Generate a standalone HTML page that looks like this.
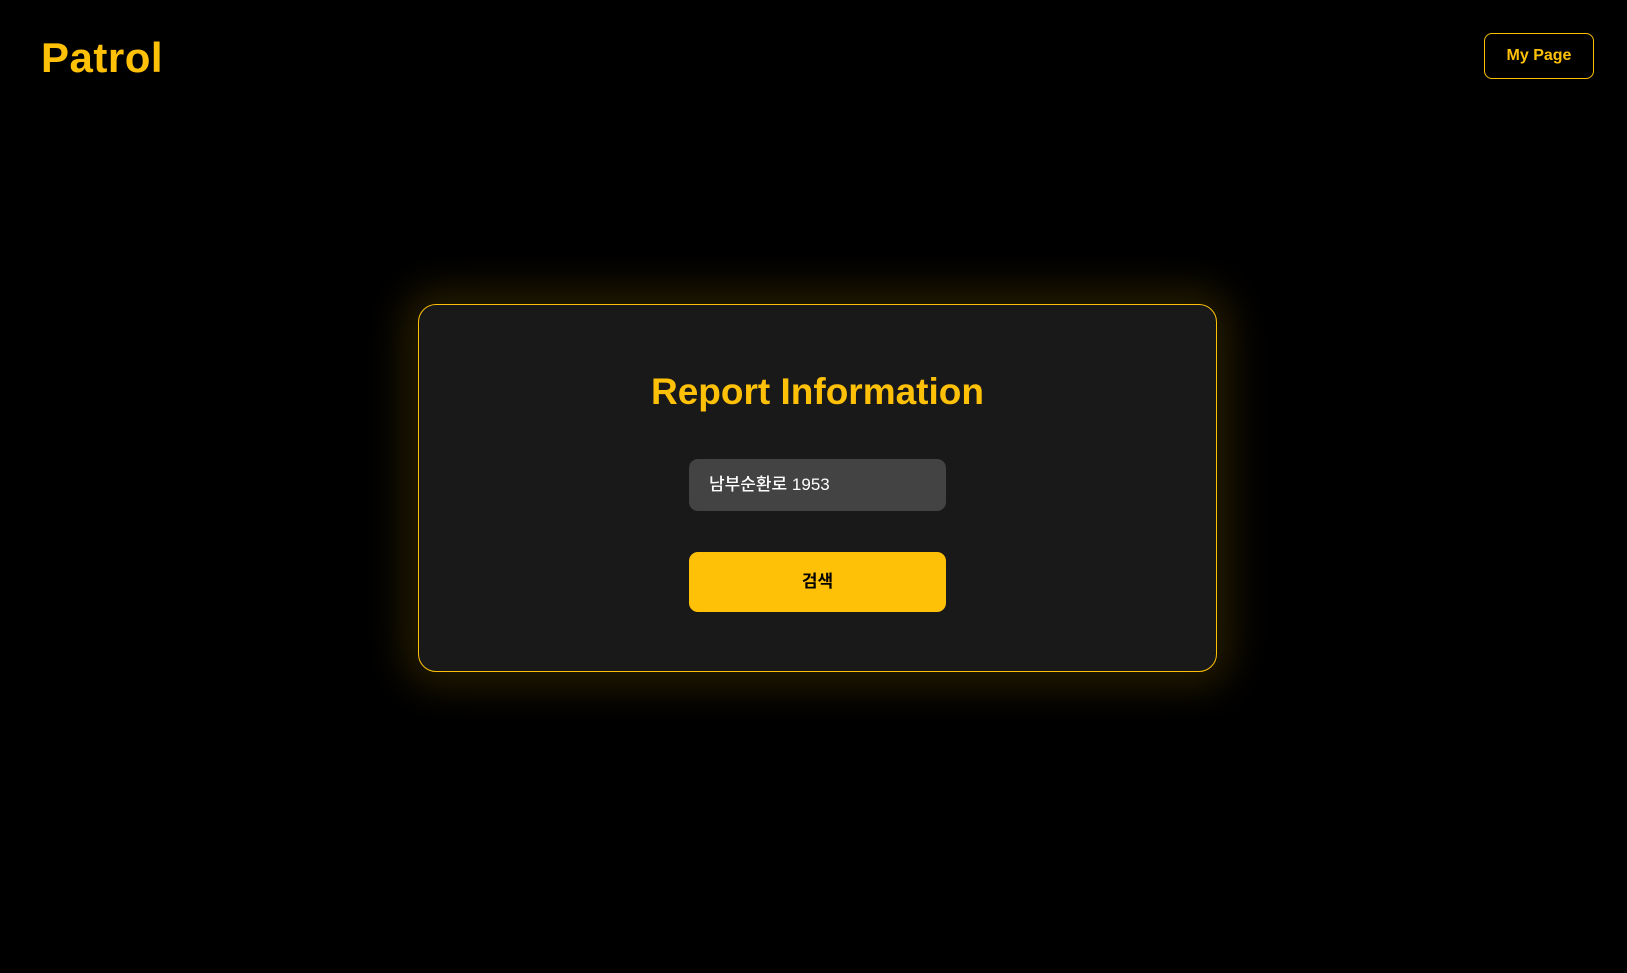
<!DOCTYPE html>
<html><head><meta charset="utf-8"><style>
html,body{margin:0;padding:0;background:#000;width:1627px;height:973px;overflow:hidden;font-family:"Liberation Sans","Noto Sans CJK KR",sans-serif}
.logo{position:absolute;left:41px;top:34px;font-size:42px;font-weight:bold;color:#ffc107;letter-spacing:0.5px}
.my{position:absolute;left:1484px;top:33px;width:108px;height:44px;border:1px solid #ffc107;border-radius:8px;color:#ffc107;font-weight:bold;font-size:16px;display:flex;align-items:center;justify-content:center}
.card{position:absolute;left:418px;top:304px;width:797px;height:366px;border:1px solid #ffc107;border-radius:18px;background:#191919;box-shadow:0 0 40px 14px rgba(255,193,7,0.15)}
.title{position:absolute;left:0;right:0;top:66px;text-align:center;color:#ffc107;font-weight:bold;font-size:37px}
.inp{position:absolute;left:270px;top:154px;width:257px;height:52px;border-radius:9px;background:#434343;color:#fff;font-size:17px;font-weight:500;box-sizing:border-box;padding-left:20px;line-height:52px}
.btn{position:absolute;left:270px;top:247px;width:257px;height:60px;border-radius:9px;background:#ffc107;color:#000;font-size:17px;font-weight:bold;text-align:center;line-height:60px}
</style></head><body>
<div class="logo">Patrol</div>
<div class="my">My Page</div>
<div class="card">
<div class="title">Report Information</div>
<div class="inp">남부순환로 1953</div>
<div class="btn">검색</div>
</div>
</body></html>
